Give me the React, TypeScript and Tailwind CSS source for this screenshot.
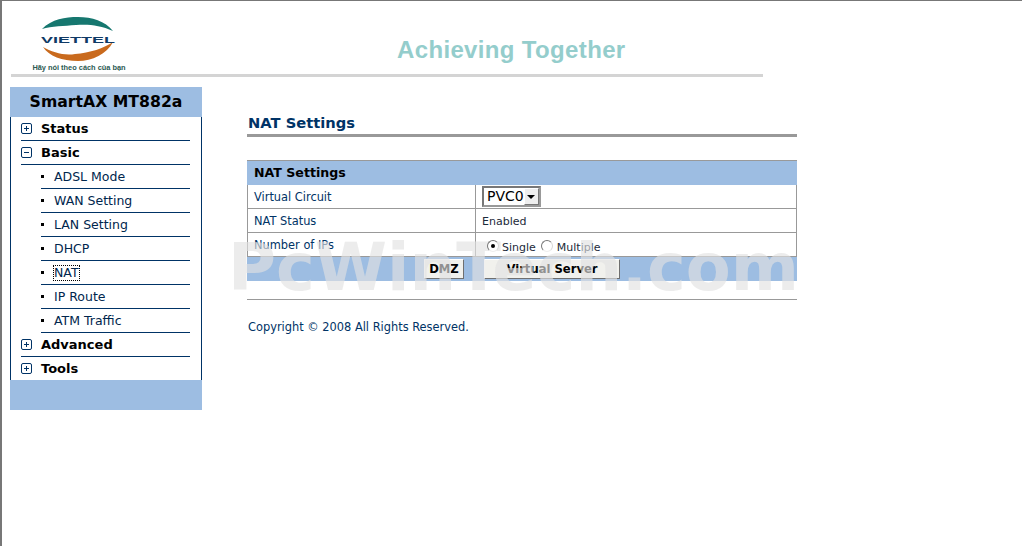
const SANS = "font-['DejaVu_Sans',Verdana,sans-serif]";

const groupRow = 'flex h-6 items-center border-b border-[#003366] ml-[10px] mr-[11px]';
const subRow = 'flex h-6 items-center border-b border-[#003366] ml-[30px] mr-[11px]';

function TreeBox({ open }: { open: boolean }) {
    return (
        <svg width="11" height="11" viewBox="0 0 11 11" className="shrink-0">
            <rect x="0.5" y="0.5" width="10" height="10" rx="1.5" fill="none" stroke="#003366" />
            <path d="M3 5.5h5" stroke="#003366" />
            {!open && <path d="M5.5 3v5" stroke="#003366" />}
        </svg>
    );
}

function Group({ label, open, last }: { label: string; open?: boolean; last?: boolean }) {
    return (
        <div className={last ? 'flex h-[23px] items-center ml-[10px] mr-[11px]' : groupRow}>
            <TreeBox open={!!open} />
            <span className="ml-[9px] text-[13px] font-bold text-black">{label}</span>
        </div>
    );
}

function Sub({ label, focused }: { label: string; focused?: boolean }) {
    return (
        <div className={subRow}>
            <span className="h-[3px] w-[3px] bg-black" />
            <span
                className={`ml-[10px] text-[12.5px] leading-[14px] text-[#00264d] ${
                    focused ? 'outline-1 outline-dotted outline-black' : ''
                }`}
            >
                {label}
            </span>
        </div>
    );
}

function Logo() {
    return (
        <div className="flex w-[96px] flex-col items-center">
            <svg width="78" height="46" viewBox="0 0 78 46">
                <path d="M2 13C12 3 25 1 38 1c14 0 27 4 35 14C60 9 48 8 36 9 24 10 12 10 2 13z" fill="#16776f" />
                <path d="M3 31c9 5 21 9 32 7 15-1 29-6 38-12-6 12-21 19-35 19C22 45 9 40 3 31z" fill="#c96a1d" />
                <text
                    x="38"
                    y="27"
                    textAnchor="middle"
                    fontFamily="Liberation Sans, sans-serif"
                    fontWeight="700"
                    fontSize="9"
                    textLength="74"
                    lengthAdjust="spacingAndGlyphs"
                    fill="#0f3a66"
                >
                    VIETTEL
                </text>
            </svg>
            <span className="mt-px whitespace-nowrap font-['Liberation_Sans',Arial,sans-serif] text-[7.4px] leading-[10px] font-bold text-[#2c5a52]">
                Hãy nói theo cách của bạn
            </span>
        </div>
    );
}

function Radio({ checked }: { checked?: boolean }) {
    return (
        <span className="flex h-3 w-3 items-center justify-center rounded-full border border-t-[#777777] border-r-[#d8d8d8] border-b-[#eeeeee] border-l-[#777777] bg-white">
            {checked && <span className="h-1 w-1 rounded-full bg-black" />}
        </span>
    );
}

function Button({ label, width }: { label: string; width: string }) {
    return (
        <button
            className={`flex h-5 ${width} items-center justify-center border border-t-white border-r-[#6f6f6f] border-b-[#6f6f6f] border-l-white bg-[#f1f1ed] pt-px text-[11.6px] font-bold text-black`}
        >
            {label}
        </button>
    );
}

function FieldRow({ label, children }: { label: string; children: React.ReactNode }) {
    return (
        <div className="flex h-6 border-x border-b border-[#999999]">
            <div className="flex w-[228px] items-center border-r border-[#999999] pt-[2px] pl-[6px] text-[11.4px] text-[#003366]">
                {label}
            </div>
            <div className="flex flex-1 items-center pl-[6px] text-[11px] text-[#1c2a3a]">{children}</div>
        </div>
    );
}

export default function App() {
    return (
        <div className={`relative h-[546px] w-[1022px] overflow-hidden border-t border-l-2 border-[#777777] bg-white ${SANS}`}>
            <header className="ml-[9px] w-[752px] border-b-[3px] border-[#d4d4d4] pt-[15px]">
                <div className="flex h-[58px]">
                    <div className="ml-5">
                        <Logo />
                    </div>
                    <h1 className="mt-[19px] ml-[270px] font-['Liberation_Sans',Arial,sans-serif] text-[24px] leading-[30px] font-bold tracking-[0.35px] text-[#94cdcc]">
                        Achieving Together
                    </h1>
                </div>
            </header>

            <div className="mt-[10px] flex">
                <aside className="ml-2 w-[192px]">
                    <div className="flex h-[30px] items-center justify-center bg-[#9dbde2] text-[15.7px] font-bold text-black">
                        SmartAX MT882a
                    </div>
                    <nav className="border-x border-[#003366]">
                        <Group label="Status" />
                        <Group label="Basic" open />
                        <Sub label="ADSL Mode" />
                        <Sub label="WAN Setting" />
                        <Sub label="LAN Setting" />
                        <Sub label="DHCP" />
                        <Sub label="NAT" focused />
                        <Sub label="IP Route" />
                        <Sub label="ATM Traffic" />
                        <Group label="Advanced" />
                        <Group label="Tools" last />
                    </nav>
                    <div className="h-[30px] bg-[#9dbde2]" />
                </aside>

                <main className="ml-[45px] w-[550px] pt-[25px]">
                    <h2 className="pl-px text-[14.7px] leading-[21px] font-bold text-[#003366]">NAT Settings</h2>
                    <div className="mt-px h-[3px] bg-[#999999]" />

                    <section className="mt-[23px] border-t border-[#999999]">
                        <div className="flex h-6 items-center bg-[#9dbde2] pl-[7px] text-[12.6px] font-bold text-black">
                            NAT Settings
                        </div>
                        <FieldRow label="Virtual Circuit">
                            <div className="flex h-[21px] w-[59px] items-center justify-between border-2 border-t-[#777777] border-r-[#999999] border-b-[#999999] border-l-[#777777] bg-white pl-[3px] text-[14px] text-black">
                                PVC0
                                <span className="flex h-[17px] w-[17px] items-center justify-center border border-t-white border-r-[#777777] border-b-[#777777] border-l-white bg-[#eeeeee]">
                                    <span className="border-x-4 border-t-4 border-x-transparent border-t-black" />
                                </span>
                            </div>
                        </FieldRow>
                        <FieldRow label="NAT Status">
                            <span className="pt-[3px]">Enabled</span>
                        </FieldRow>
                        <FieldRow label="Number of IPs">
                            <div className="mt-[7px] flex items-center pl-[5px]">
                                <span className="relative z-10 -mt-[4px]">
                                    <Radio checked />
                                </span>
                                <span className="ml-[3px]">Single</span>
                                <span className="-mt-[4px] ml-[5px]">
                                    <Radio />
                                </span>
                                <span className="ml-[4px]">Multiple</span>
                            </div>
                        </FieldRow>
                        <div className="flex h-6 items-center bg-[#9dbde2]">
                            <div className="ml-[177px]">
                                <Button label="DMZ" width="w-[40px]" />
                            </div>
                            <div className="ml-5">
                                <Button label="Virtual Server" width="w-[136px]" />
                            </div>
                        </div>
                    </section>

                    <div className="mt-[18px] h-px bg-[#999999]" />
                    <p className="mt-[20px] pl-px text-[11.4px] leading-[14px] text-[#003366]">
                        Copyright © 2008 All Rights Reserved.
                    </p>
                </main>
            </div>

            {/* watermark stamped over the shot */}
            <div className="pointer-events-none absolute top-[233px] left-[226px] text-[65.5px] leading-[66px] font-bold whitespace-nowrap text-[rgba(225,225,225,0.64)]">
                PcWinTech.com
            </div>
        </div>
    );
}
